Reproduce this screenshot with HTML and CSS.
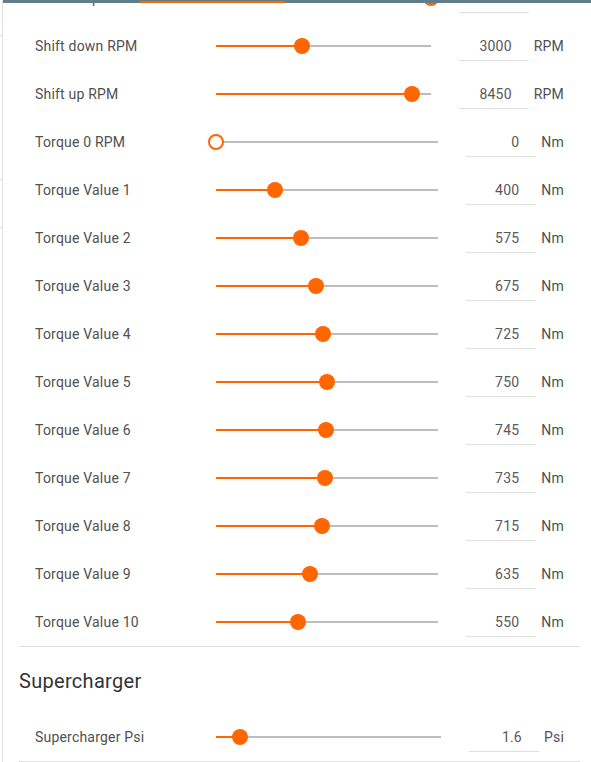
FILE: index.html
```html
<!DOCTYPE html>
<html lang="en">

<head>
    <meta charset="UTF-8">
    <meta name="viewport" content="width=device-width, initial-scale=1.0">
    <title>Engine Tuning</title>
    <link rel="stylesheet" href="styles.css">
</head>

<body>
    <div class="tab-header">
        <div class="ink-bar"></div>
    </div>

    <div class="page">
        <div class="side">
            <span class="tick first"></span>
            <span class="tick gap3"></span>
            <span class="tick gap1"></span>
        </div>

        <div class="panel">
            <div class="section">
                <div class="row">
                    <span class="label">Limiter Speed</span>
                    <div class="slider"><div class="fill" style="width: 100%"></div><div class="thumb" style="left: 100%"></div></div>
                    <input class="value" type="text" value="9000" readonly>
                    <span class="unit">RPM</span>
                </div>
                <div class="row">
                    <span class="label">Shift down RPM</span>
                    <div class="slider"><div class="fill" style="width: 39.9%"></div><div class="thumb" style="left: 39.9%"></div></div>
                    <input class="value" type="text" value="3000" readonly>
                    <span class="unit">RPM</span>
                </div>
                <div class="row">
                    <span class="label">Shift up RPM</span>
                    <div class="slider"><div class="fill" style="width: 91.1%"></div><div class="thumb" style="left: 91.1%"></div></div>
                    <input class="value" type="text" value="8450" readonly>
                    <span class="unit">RPM</span>
                </div>
                <div class="row">
                    <span class="label">Torque 0 RPM</span>
                    <div class="slider"><div class="fill" style="width: 0%"></div><div class="thumb empty" style="left: 0%"></div></div>
                    <input class="value" type="text" value="0" readonly>
                    <span class="unit">Nm</span>
                </div>
                <div class="row">
                    <span class="label">Torque Value 1</span>
                    <div class="slider"><div class="fill" style="width: 26.67%"></div><div class="thumb" style="left: 26.67%"></div></div>
                    <input class="value" type="text" value="400" readonly>
                    <span class="unit">Nm</span>
                </div>
                <div class="row">
                    <span class="label">Torque Value 2</span>
                    <div class="slider"><div class="fill" style="width: 38.33%"></div><div class="thumb" style="left: 38.33%"></div></div>
                    <input class="value" type="text" value="575" readonly>
                    <span class="unit">Nm</span>
                </div>
                <div class="row">
                    <span class="label">Torque Value 3</span>
                    <div class="slider"><div class="fill" style="width: 45%"></div><div class="thumb" style="left: 45%"></div></div>
                    <input class="value" type="text" value="675" readonly>
                    <span class="unit">Nm</span>
                </div>
                <div class="row">
                    <span class="label">Torque Value 4</span>
                    <div class="slider"><div class="fill" style="width: 48.33%"></div><div class="thumb" style="left: 48.33%"></div></div>
                    <input class="value" type="text" value="725" readonly>
                    <span class="unit">Nm</span>
                </div>
                <div class="row">
                    <span class="label">Torque Value 5</span>
                    <div class="slider"><div class="fill" style="width: 50%"></div><div class="thumb" style="left: 50%"></div></div>
                    <input class="value" type="text" value="750" readonly>
                    <span class="unit">Nm</span>
                </div>
                <div class="row">
                    <span class="label">Torque Value 6</span>
                    <div class="slider"><div class="fill" style="width: 49.67%"></div><div class="thumb" style="left: 49.67%"></div></div>
                    <input class="value" type="text" value="745" readonly>
                    <span class="unit">Nm</span>
                </div>
                <div class="row">
                    <span class="label">Torque Value 7</span>
                    <div class="slider"><div class="fill" style="width: 49%"></div><div class="thumb" style="left: 49%"></div></div>
                    <input class="value" type="text" value="735" readonly>
                    <span class="unit">Nm</span>
                </div>
                <div class="row">
                    <span class="label">Torque Value 8</span>
                    <div class="slider"><div class="fill" style="width: 47.67%"></div><div class="thumb" style="left: 47.67%"></div></div>
                    <input class="value" type="text" value="715" readonly>
                    <span class="unit">Nm</span>
                </div>
                <div class="row">
                    <span class="label">Torque Value 9</span>
                    <div class="slider"><div class="fill" style="width: 42.33%"></div><div class="thumb" style="left: 42.33%"></div></div>
                    <input class="value" type="text" value="635" readonly>
                    <span class="unit">Nm</span>
                </div>
                <div class="row">
                    <span class="label">Torque Value 10</span>
                    <div class="slider"><div class="fill" style="width: 36.67%"></div><div class="thumb" style="left: 36.67%"></div></div>
                    <input class="value" type="text" value="550" readonly>
                    <span class="unit">Nm</span>
                </div>
            </div>

            <h3 class="section-title">Supercharger</h3>
            <div class="section">
                <div class="row">
                    <span class="label">Supercharger Psi</span>
                    <div class="slider"><div class="fill" style="width: 10.67%"></div><div class="thumb" style="left: 10.67%"></div></div>
                    <input class="value" type="text" value="1.6" readonly>
                    <span class="unit">Psi</span>
                </div>
            </div>
        </div>
    </div>
</body>

</html>
```

FILE: styles.css
```css
body {
    margin: 0;
    padding: 0;
    font-family: Roboto, "Noto Sans", sans-serif;
    font-size: 14px;
    letter-spacing: 0.2px;
    color: #505050;
    background: #fff;
    overflow: hidden;
}

/* header of the tab group, scrolled so only its bottom edge shows */
.tab-header {
    position: fixed;
    top: 0;
    left: 3px;
    right: 0;
    height: 3px;
    background: #607d8b;
    z-index: 10;
}

.tab-header .ink-bar {
    position: absolute;
    left: 137px;
    bottom: 0;
    width: 145px;
    height: 2px;
    background: #ff6600;
}

.page {
    display: flex;
    height: 100vh;
}

.side {
    width: 2px;
    border-right: 1px solid #e0e0e0;
    display: flex;
    flex-direction: column;
}

.side .tick {
    display: block;
    height: 1px;
    background: #e0e0e0;
}

.side .tick.first {
    margin-top: 35px;
}

.side .tick.gap3 {
    margin-top: 143px;
}

.side .tick.gap1 {
    margin-top: 47px;
}

.panel {
    flex: 1;
    padding: 0 11px 0 16px;
    margin-top: -26px;
}

.section {
    border-bottom: 1px solid #e0e0e0;
}

.row {
    display: flex;
    align-items: center;
    height: 48px;
    padding: 0 16px;
}

.row .label {
    width: 181px;
    flex-shrink: 0;
}

.slider {
    flex: 1;
    position: relative;
    height: 16px;
    margin-right: 28px;
}

.slider::before {
    content: "";
    position: absolute;
    left: 0;
    right: 0;
    top: 7px;
    height: 2px;
    background: #bdbdbd;
}

.slider .fill {
    position: absolute;
    left: 0;
    top: 7px;
    height: 2px;
    background: #ff6600;
}

.slider .thumb {
    position: absolute;
    top: 0;
    width: 16px;
    height: 16px;
    margin-left: -8px;
    border-radius: 50%;
    background: #ff6600;
    box-sizing: border-box;
}

.slider .thumb.empty {
    background: #fff;
    border: 2px solid #ff6600;
}

.value {
    align-self: flex-start;
    margin: 10px 0 0;
    width: 70px;
    height: 29px;
    box-sizing: border-box;
    padding: 0 17px 0 0;
    border: none;
    border-bottom: 1px solid #e0e0e0;
    outline: none;
    font-family: Roboto, "Noto Sans", sans-serif;
    font-size: 14px;
    letter-spacing: 0.2px;
    line-height: 28px;
    color: #595959;
    text-align: right;
    background: transparent;
}

.unit {
    margin-left: 5px;
}

.section-title {
    margin: 0;
    padding: 22px 0 20px;
    font-size: 20px;
    line-height: 24px;
    font-weight: 400;
    letter-spacing: 0.3px;
    color: #333;
}
```
